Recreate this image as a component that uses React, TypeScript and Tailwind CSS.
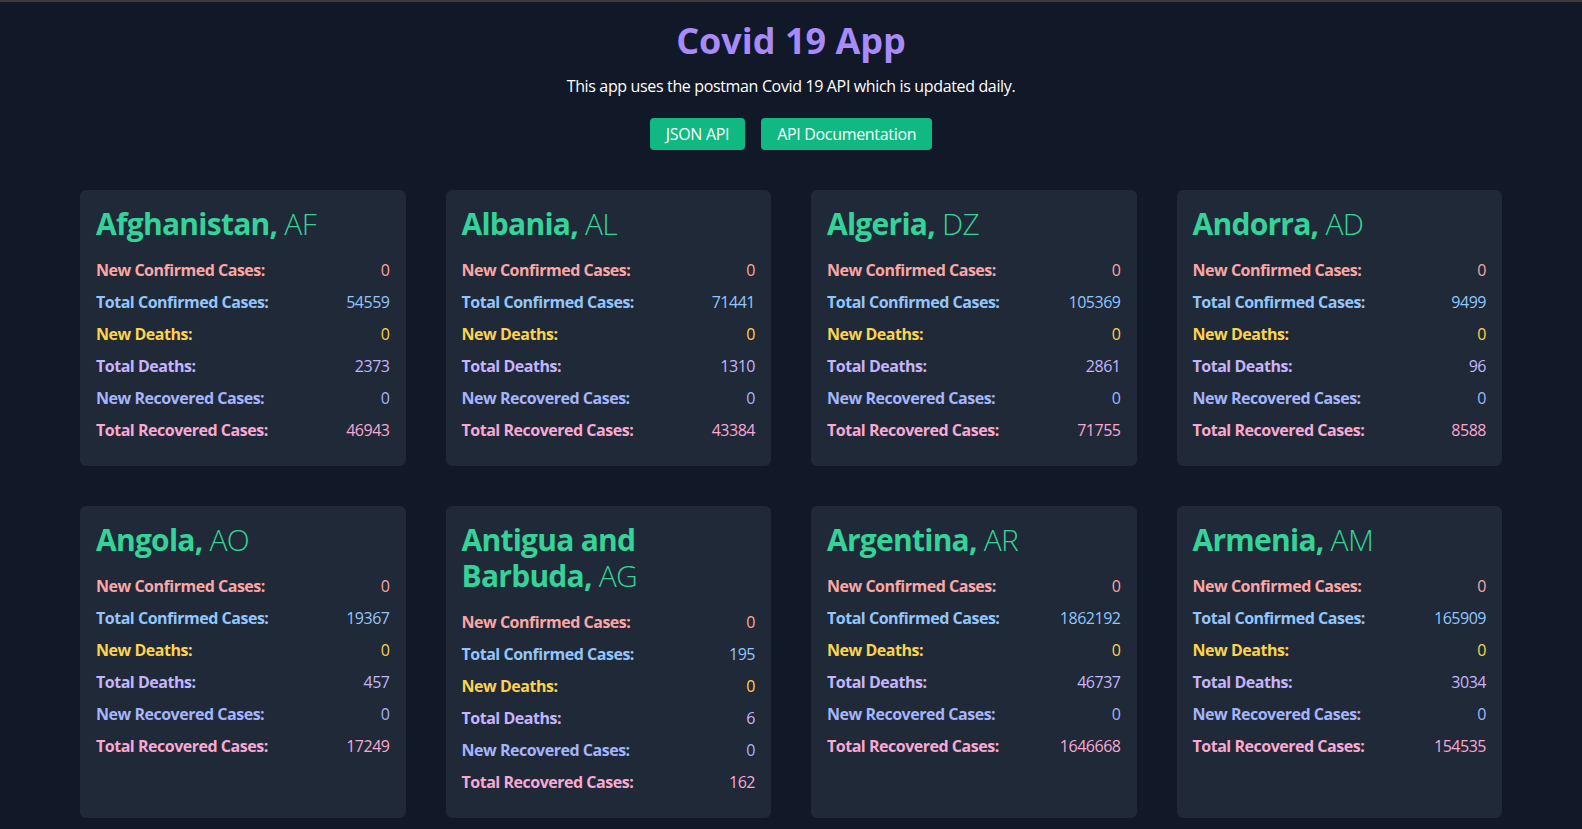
import React from "react";

type Country = {
  name: string;
  code: string;
  newConfirmed: number;
  totalConfirmed: number;
  newDeaths: number;
  totalDeaths: number;
  newRecovered: number;
  totalRecovered: number;
};

const countries: Country[] = [
  { name: "Afghanistan", code: "AF", newConfirmed: 0, totalConfirmed: 54559, newDeaths: 0, totalDeaths: 2373, newRecovered: 0, totalRecovered: 46943 },
  { name: "Albania", code: "AL", newConfirmed: 0, totalConfirmed: 71441, newDeaths: 0, totalDeaths: 1310, newRecovered: 0, totalRecovered: 43384 },
  { name: "Algeria", code: "DZ", newConfirmed: 0, totalConfirmed: 105369, newDeaths: 0, totalDeaths: 2861, newRecovered: 0, totalRecovered: 71755 },
  { name: "Andorra", code: "AD", newConfirmed: 0, totalConfirmed: 9499, newDeaths: 0, totalDeaths: 96, newRecovered: 0, totalRecovered: 8588 },
  { name: "Angola", code: "AO", newConfirmed: 0, totalConfirmed: 19367, newDeaths: 0, totalDeaths: 457, newRecovered: 0, totalRecovered: 17249 },
  { name: "Antigua and Barbuda", code: "AG", newConfirmed: 0, totalConfirmed: 195, newDeaths: 0, totalDeaths: 6, newRecovered: 0, totalRecovered: 162 },
  { name: "Argentina", code: "AR", newConfirmed: 0, totalConfirmed: 1862192, newDeaths: 0, totalDeaths: 46737, newRecovered: 0, totalRecovered: 1646668 },
  { name: "Armenia", code: "AM", newConfirmed: 0, totalConfirmed: 165909, newDeaths: 0, totalDeaths: 3034, newRecovered: 0, totalRecovered: 154535 },
];

function Row({ label, value, color }: { label: string; value: number; color: string }) {
  return (
    <div className={`flex justify-between items-center mb-2 text-base leading-6 tracking-[-0.03em] ${color}`}>
      <span className="font-bold">{label}</span>
      <span className="font-normal">{value}</span>
    </div>
  );
}

function Card({ c }: { c: Country }) {
  return (
    <div className="bg-[#1f2937] rounded-md p-4">
      <h2 className="text-[30px] leading-9 tracking-[-0.025em] text-[#34d399] mb-4">
        <span className="font-bold">{c.name},</span>{" "}
        <span className="font-light">{c.code}</span>
      </h2>
      <Row label="New Confirmed Cases:" value={c.newConfirmed} color="text-[#fca5a5]" />
      <Row label="Total Confirmed Cases:" value={c.totalConfirmed} color="text-[#93c5fd]" />
      <Row label="New Deaths:" value={c.newDeaths} color="text-[#fcd34d]" />
      <Row label="Total Deaths:" value={c.totalDeaths} color="text-[#c4b5fd]" />
      <Row label="New Recovered Cases:" value={c.newRecovered} color="text-[#a5b4fc]" />
      <Row label="Total Recovered Cases:" value={c.totalRecovered} color="text-[#f9a8d4]" />
    </div>
  );
}

export default function App() {
  return (
    <div
      className="min-h-screen bg-[#111827] border-t-2 border-[#3a3a3a] text-white pb-3"
      style={{ fontFamily: '"Open Sans", "Noto Sans", sans-serif' }}
    >
      <header className="pt-[19px] flex flex-col items-center">
        <h1 className="text-4xl leading-10 font-bold text-[#a78bfa]">Covid 19 App</h1>
        <p className="mt-[13px] text-base leading-6 tracking-[-0.022em] text-white">
          This app uses the postman Covid 19 API which is updated daily.
        </p>
        <div className="mt-5 flex gap-4">
          <a className="bg-[#10b981] text-white px-4 py-1 rounded text-base leading-6 tracking-[-0.02em]">JSON API</a>
          <a className="bg-[#10b981] text-white px-4 py-1 rounded text-base leading-6 tracking-[-0.02em]">API Documentation</a>
        </div>
      </header>
      <main className="px-20 mt-10 grid grid-cols-4 gap-10">
        {countries.map((c) => (
          <Card key={c.code} c={c} />
        ))}
      </main>
    </div>
  );
}
